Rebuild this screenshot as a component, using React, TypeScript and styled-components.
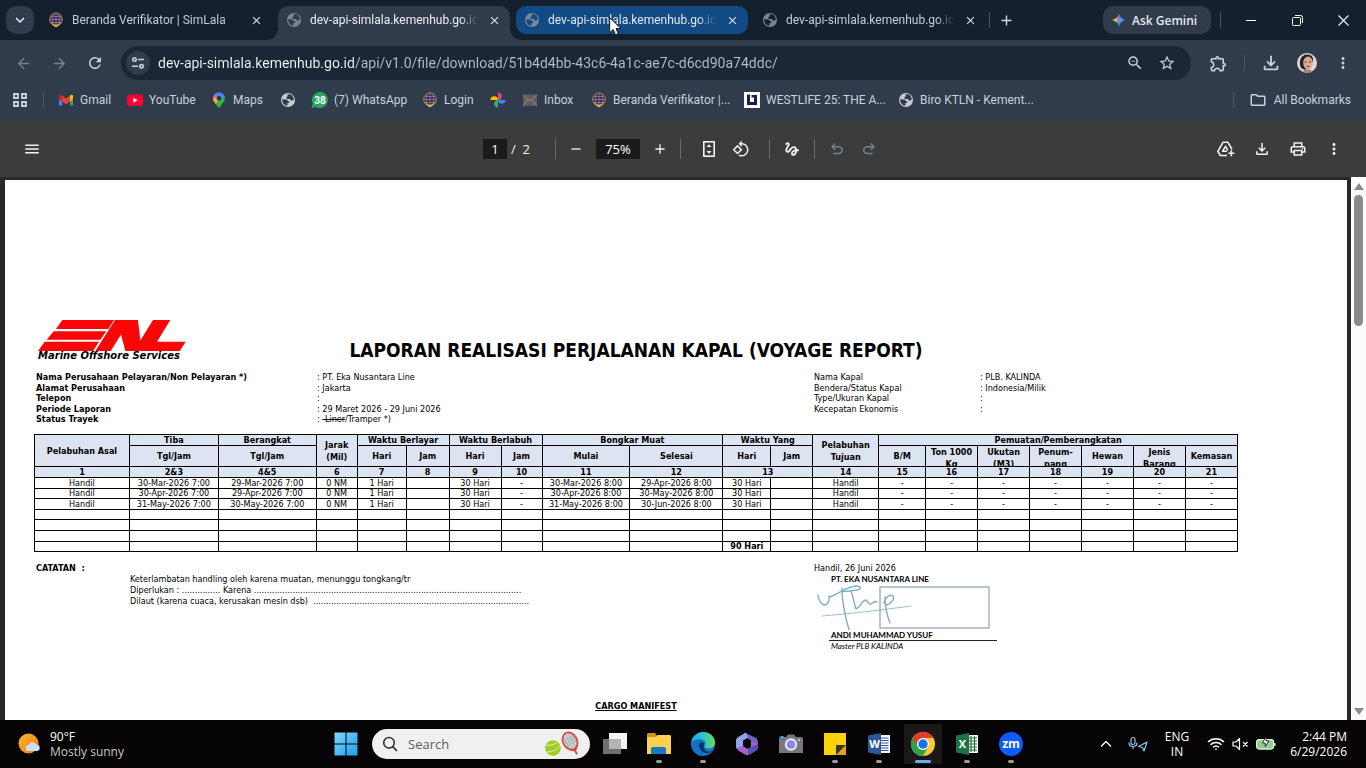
import React from "react";
import styled, { createGlobalStyle, css } from "styled-components";
import {
  MdAdd,
  MdArrowBack,
  MdArrowForward,
  MdClose,
  MdGesture,
  MdKeyboardArrowDown,
  MdMenu,
  MdMoreVert,
  MdOutlineExtension,
  MdOutlineFileDownload,
  MdOutlineFolder,
  MdOutlinePrint,
  MdRefresh,
  MdRemove,
  MdRotate90DegreesCcw,
  MdStarBorder,
  MdZoomOut,
} from "react-icons/md";

const uiFont = `"Open Sans", "Noto Sans", sans-serif`;
const chromeFont = `Roboto, "Open Sans", sans-serif`;
const docFont = `"DejaVu Sans Condensed", "DejaVu Sans", sans-serif`;

const GlobalStyle = createGlobalStyle`
  * { box-sizing: border-box; }
  body { margin: 0; background: #000; font-family: ${uiFont}; }
  button, input { font: inherit; color: inherit; border: 0; padding: 0; margin: 0; background: none; outline: 0; }
  a { color: inherit; text-decoration: none; }
  svg { display: block; flex: none; }
`;

const Desktop = styled.div`
  display: flex;
  flex-direction: column;
  height: 100vh;
  overflow: hidden;
`;

/* ---------- browser chrome ---------- */

const TabStrip = styled.header`
  display: flex;
  align-items: center;
  flex: none;
  height: 40px;
  padding-left: 6px;
  background: #14202d;
  color: #c6ccd4;
  font-family: ${chromeFont};
`;

const TabSearch = styled.button`
  display: grid;
  place-items: center;
  width: 28px;
  height: 28px;
  border-radius: 10px;
  background: #303b4b;
  color: #e8ebef;
`;

const Tabs = styled.div`
  display: flex;
  gap: 6px;
  margin: 0 3px 0 6px;
  height: 40px;
  align-items: center;
`;

const Tab = styled.div<{ $state?: "active" | "hover" }>`
  position: relative;
  display: flex;
  align-items: center;
  width: 232px;
  height: 28px;
  padding: 0 8px;
  border-radius: 10px;
  font-size: 12px;
  ${(p) =>
    p.$state === "hover" &&
    css`
      background: #124a83;
      color: #dfe7f0;
    `}
  ${(p) =>
    p.$state === "active" &&
    css`
      height: 34px;
      align-self: flex-end;
      padding-bottom: 6px;
      border-radius: 10px 10px 0 0;
      background: #303b4b;
      color: #eceff3;
      &::before,
      &::after {
        content: "";
        position: absolute;
        bottom: 0;
        width: 10px;
        height: 10px;
      }
      &::before {
        right: 100%;
        background: radial-gradient(circle at 0 0, transparent 9px, #303b4b 10px);
      }
      &::after {
        left: 100%;
        background: radial-gradient(circle at 100% 0, transparent 9px, #303b4b 10px);
      }
    `}
`;

const TabTitle = styled.button`
  flex: 1;
  min-width: 0;
  margin: 0 8px;
  overflow: hidden;
  white-space: nowrap;
  text-align: left;
  line-height: 20px;
  mask-image: linear-gradient(90deg, #000 calc(100% - 18px), transparent);
`;

const TabClose = styled.button`
  display: grid;
  place-items: center;
  width: 16px;
  height: 16px;
  color: #e0e4e9;
`;

const Divider = styled.span<{ $h?: number; $color?: string }>`
  flex: none;
  width: 1px;
  height: ${(p) => p.$h ?? 16}px;
  background: ${(p) => p.$color ?? "#4a5768"};
`;

const NewTab = styled.button`
  display: grid;
  place-items: center;
  width: 32px;
  height: 28px;
  color: #d5dae0;
`;

const WindowTools = styled.div`
  display: flex;
  align-items: center;
  margin-left: auto;
`;

const Gemini = styled.button`
  display: flex;
  align-items: center;
  gap: 6px;
  width: 108px;
  height: 28px;
  margin-right: 9px;
  padding-left: 9px;
  border-radius: 10px;
  background: #303b4b;
  color: #e4e8ee;
  font-family: ${uiFont};
  font-size: 12px;
  font-weight: 600;
  white-space: nowrap;
`;

const WindowButton = styled.button`
  display: grid;
  place-items: center;
  width: 46px;
  height: 40px;
  color: #fff;
`;

const AddressRow = styled.div`
  display: flex;
  align-items: center;
  flex: none;
  height: 46px;
  padding: 0 5px;
  background: #303b4b;
  color: #c9d1dc;
  font-family: ${chromeFont};
`;

const IconButton = styled.button<{ $w?: number; $dim?: boolean }>`
  display: grid;
  place-items: center;
  flex: none;
  width: ${(p) => p.$w ?? 36}px;
  height: 34px;
  ${(p) => p.$dim && "color: #768294;"}
`;

const Omnibox = styled.div`
  display: flex;
  align-items: center;
  flex: 1;
  height: 34px;
  margin: 0 9px 0 8px;
  padding: 0 8px 0 5px;
  border-radius: 17px;
  background: #1b2736;
`;

const SiteInfo = styled.button`
  display: grid;
  place-items: center;
  width: 24px;
  height: 24px;
  border-radius: 12px;
  background: #303b4b;
`;

const UrlInput = styled.input`
  flex: 1;
  min-width: 0;
  margin-left: 8px;
  font-size: 14px;
  line-height: 20px;
  color: transparent;
  background: linear-gradient(90deg, #f1f4f7 197px, #b4bdc9 197px);
  background-clip: text;
  -webkit-background-clip: text;
`;

const BookmarkBar = styled.nav`
  display: flex;
  align-items: center;
  flex: none;
  height: 35px;
  padding: 0 15px 7px 12px;
  background: #303b4b;
  color: #c9d1dc;
  font-family: ${chromeFont};
  font-size: 12px;
`;

const Bookmarks = styled.div`
  display: grid;
  grid-template-columns: 69px 84px 69px 31px 111px 68px 32px 69px 153px 154px 140px;
  margin-left: 14px;
`;

const Bookmark = styled.a`
  display: flex;
  align-items: center;
  gap: 6px;
  height: 20px;
  white-space: nowrap;
`;

const AllBookmarks = styled.button`
  display: flex;
  align-items: center;
  gap: 7px;
  margin-left: 15px;
  white-space: nowrap;
`;

/* ---------- PDF viewer ---------- */

const PdfToolbar = styled.div`
  display: grid;
  grid-template-columns: 1fr auto 1fr;
  align-items: center;
  flex: none;
  height: 56px;
  padding: 0 14px;
  background: #3c3c3c;
  color: #f1f1f1;
  font-size: 14px;
`;

const PdfGroup = styled.div<{ $end?: boolean }>`
  display: flex;
  align-items: center;
  justify-self: ${(p) => (p.$end ? "end" : "start")};
`;

const PdfField = styled.input<{ $w: number }>`
  width: ${(p) => p.$w}px;
  height: 20px;
  background: #1b1b1b;
  color: #fff;
  font-size: 13px;
  text-align: center;
`;

const PageTotal = styled.span`
  width: 43px;
  padding-left: 4px;
  font-size: 13px;
  white-space: pre;
`;

const Viewer = styled.main`
  display: flex;
  flex: 1;
  min-height: 0;
  padding: 3px 0 0 5px;
  background: #282828;
`;

const Sheet = styled.article`
  flex: 1;
  min-width: 0;
  margin-right: 4px;
  padding: 140px 109px 0 29px;
  overflow: hidden;
  background: #fff;
  color: #000;
  font-family: ${docFont};
  font-size: 9px;
`;

const Scrollbar = styled.div`
  display: flex;
  flex-direction: column;
  align-items: center;
  flex: none;
  width: 15px;
  margin-top: -3px;
  padding: 4px 0;
  background: #fcfcfc;
`;

const ScrollArrow = styled.button`
  display: grid;
  place-items: center;
  width: 15px;
  height: 10px;
`;

const ScrollTrack = styled.div`
  flex: 1;
  padding-top: 4px;
`;

const ScrollThumb = styled.div`
  width: 9px;
  height: 131px;
  border-radius: 5px;
  background: #8b8b8b;
`;

const Letterhead = styled.div`
  display: grid;
  grid-template-columns: 154px 1fr 154px;
  height: 52px;
`;

const Logo = styled.div`
  padding-left: 4px;
  font-family: "DejaVu Sans", sans-serif;
  font-size: 10px;
  font-style: italic;
  font-weight: 700;
  line-height: 9px;
  white-space: nowrap;
`;

const Title = styled.h1`
  margin: 18px 0 0;
  font-size: 19px;
  line-height: 24px;
  text-align: center;
  white-space: nowrap;
`;

const Particulars = styled.div`
  display: grid;
  grid-template-columns: 778px 1fr;
  padding-left: 2px;
`;

const Facts = styled.dl<{ $label: number; $bold?: boolean }>`
  display: grid;
  grid-template-columns: ${(p) => p.$label}px auto;
  grid-template-rows: 11px 10px 11px 10px 11px;
  justify-content: start;
  margin: 0;
  line-height: 11px;
  white-space: pre;
  dt {
    font-weight: ${(p) => (p.$bold ? 700 : 400)};
  }
  dd {
    margin: 0;
  }
`;

const Voyage = styled.table`
  width: 100%;
  margin: 9px 0 11px;
  table-layout: fixed;
  border-collapse: collapse;
  line-height: 9px;
  text-align: center;
  th,
  td {
    padding: 0;
    border: 1px solid #000;
    white-space: nowrap;
  }
  th {
    background: #dce4f1;
  }
  th[rowspan] {
    line-height: 12px;
  }
`;

const Row = styled.tr<{ $h: number }>`
  height: ${(p) => p.$h}px;
`;

const TwoLines = styled.div`
  height: 20px;
  overflow: hidden;
  line-height: 12px;
  white-space: pre;
`;

const Lower = styled.div`
  display: grid;
  grid-template-columns: 780px 1fr;
  line-height: 11px;
`;

const Notes = styled.section`
  padding-left: 2px;
  white-space: pre;
  p {
    width: 420px;
    margin: 0 0 0 94px;
  }
`;

const ClippedNote = styled.p`
  && {
    width: 281px;
    overflow: hidden;
  }
`;

const Signature = styled.section`
  font-size: 9px;
`;

const Signer = styled.div<{ $italic?: boolean; $rule?: boolean }>`
  width: 168px;
  margin-left: 15px;
  padding-left: 2px;
  height: 11px;
  font-family: Lato, "Open Sans", sans-serif;
  font-size: 8px;
  font-weight: ${(p) => (p.$italic ? 400 : 700)};
  font-style: ${(p) => (p.$italic ? "italic" : "normal")};
  border-bottom: ${(p) => (p.$rule ? "1px solid #222" : "0")};
`;

const Manifest = styled.h2`
  margin: 48px 0 0;
  font-size: 9px;
  line-height: 12px;
  text-align: center;
  text-decoration: underline;
`;

/* ---------- taskbar ---------- */

const Taskbar = styled.footer`
  display: grid;
  grid-template-columns: 1fr auto 1fr;
  flex: none;
  height: 48px;
  background: #050303;
  color: #fff;
  font-size: 12px;
  line-height: 15px;
`;

const Weather = styled.button`
  display: flex;
  align-items: center;
  gap: 10px;
  padding-left: 18px;
  text-align: left;
  white-space: nowrap;
  span {
    color: #c9c9c9;
  }
`;

const Dock = styled.div`
  display: flex;
  align-items: center;
  padding-right: 9px;
`;

const SearchPill = styled.label`
  display: flex;
  align-items: center;
  width: 218px;
  height: 30px;
  margin: 0 3px 0 4px;
  padding: 0 8px 0 10px;
  border-radius: 15px;
  background: #f0f0f0;
  color: #333;
`;

const SearchInput = styled.input`
  flex: 1;
  min-width: 0;
  margin-left: 10px;
  font-size: 13px;
  &::placeholder {
    color: #5c5c5c;
    opacity: 1;
  }
`;

const AppButton = styled.button<{ $run?: boolean; $current?: boolean }>`
  position: relative;
  display: grid;
  place-items: center;
  width: 44px;
  height: 48px;
  ${(p) =>
    p.$current &&
    css`
      background: linear-gradient(#1c1819, #1c1819) center / 38px 40px no-repeat;
    `}
  ${(p) =>
    (p.$run || p.$current) &&
    css`
      &::after {
        content: "";
        position: absolute;
        bottom: 5px;
        left: 50%;
        width: ${p.$current ? 16 : 6}px;
        height: 3px;
        border-radius: 2px;
        background: ${p.$current ? "#5fb2ee" : "#9a9a9a"};
        transform: translateX(-50%);
      }
    `}
`;

const Tray = styled.div`
  display: flex;
  align-items: center;
  justify-content: flex-end;
  padding-right: 19px;
`;

const TrayItem = styled.button<{ $w?: number; $right?: boolean }>`
  display: flex;
  align-items: center;
  justify-content: ${(p) => (p.$right ? "flex-end" : "center")};
  width: ${(p) => p.$w ?? 32}px;
  height: 48px;
  text-align: ${(p) => (p.$right ? "right" : "center")};
`;

/* ---------- icons ---------- */

const Globe = ({ color = "#c6ccd4", land = "#303b4b" }) => (
  <svg width="16" height="16" viewBox="0 0 16 16" aria-hidden="true">
    <circle cx="8" cy="8" r="7" fill={color} />
    <path d="M2.3 7.2 6 7.4c1.2.1 1.900.9 1.900 1.900h1.300v1.800H7.400v2.700C4.300 13.500 2.300 11 2.200 8z" fill={land} />
    <path d="M7 2.300h3.400c2 .9 3.200 2.700 3.400 5-.8 1.300-1.800 1.700-3 1.300L10 6.900H7.600c-1 0-1.300-.5-1.300-1.200S6.800 4.600 7.600 4.600H8c0-.9-.4-1.500-1-2.300z" fill={land} />
  </svg>
);

const Crest = () => (
  <svg width="16" height="16" viewBox="0 0 16 16" aria-hidden="true">
    <circle cx="8" cy="7.200" r="6.300" fill="#35265f" stroke="#a88a45" strokeWidth="1" />
    <path d="M3 4.500h10M2 7.500h12M3 10.500h10M8 1v12M5.500 2c-1.500 3-1.500 7 0 10M10.500 2c1.500 3 1.500 7 0 10" fill="none" stroke="#a48a9a" strokeWidth=".7" />
    <path d="M1.500 8.500c.8 3.200 3 4.500 6.500 7 3.500-2.500 5.700-3.800 6.500-7C13 11 11 12.800 8 12.800S3 11 1.500 8.500z" fill="#d8c22e" />
  </svg>
);

const GmailIcon = () => (
  <svg width="16" height="16" viewBox="0 0 16 16" aria-hidden="true">
    <path d="M1 4v9.500h3V7z" fill="#4285f4" />
    <path d="M15 4v9.500h-3V7z" fill="#34a853" />
    <path d="M12 3.500c1.200-1.300 3-1.100 3 .5v3l-3 2.500z" fill="#fbbc04" />
    <path d="M4 3.500 8 6.800l4-3.300v6L8 12.200 4 9.500z" fill="#ea4335" />
    <path d="M1 4c0-1.600 1.800-1.800 3-.5v6L1 7z" fill="#c5221f" />
  </svg>
);

const YoutubeIcon = () => (
  <svg width="16" height="16" viewBox="0 0 16 16" aria-hidden="true">
    <rect x="0" y="2.500" width="16" height="11.500" rx="3" fill="#ff0033" />
    <path d="M6.300 5.700v5l4.300-2.500z" fill="#fff" />
  </svg>
);

const MapsIcon = () => (
  <svg width="16" height="16" viewBox="0 0 16 16" aria-hidden="true">
    <defs>
      <clipPath id="pin">
        <path d="M8 .5a5.900 5.900 0 0 1 5.900 5.900c0 3.300-2.700 4.300-4.300 8-.4 1.500-2.800 1.500-3.200 0-1.600-3.700-4.300-4.700-4.300-8A5.900 5.900 0 0 1 8 .5z" />
      </clipPath>
    </defs>
    <g clipPath="url(#pin)">
      <path d="M0 0h16v16H0z" fill="#34b04a" />
      <path d="M0 0h9L8 6.400 0 12z" fill="#e85ac0" />
      <path d="M8 0h8v4L8 6.400 4 2z" fill="#4285f4" />
      <path d="M0 5l8 1.400-3 5.600-5 1z" fill="#f5b02a" />
    </g>
    <circle cx="8" cy="6.300" r="2.300" fill="#24354d" />
  </svg>
);

const WhatsappIcon = () => (
  <svg width="17" height="16" viewBox="0 0 17 16" aria-hidden="true">
    <path d="M9 0a8 8 0 1 1-4 15L.6 16l1.200-4.400A8 8 0 0 1 9 0z" fill="#25a866" />
    <text x="9" y="11.500" textAnchor="middle" fontSize="10" fontWeight="700" fill="#fff">38</text>
  </svg>
);

const PhotosIcon = () => (
  <svg width="16" height="16" viewBox="0 0 16 16" aria-hidden="true">
    <path d="M8 .5a3.700 3.700 0 0 1 0 7.500z" fill="#ea4369" />
    <path d="M15.500 8A3.700 3.700 0 0 1 8 8z" fill="#4285f4" />
    <path d="M8 15.500A3.700 3.700 0 0 1 8 8z" fill="#34b26b" />
    <path d="M.5 8A3.700 3.700 0 0 1 8 8z" fill="#fbbc04" />
  </svg>
);

const InboxIcon = () => (
  <svg width="16" height="16" viewBox="0 0 16 16" aria-hidden="true">
    <rect x="1" y="2.500" width="14" height="11.500" fill="#5f5c5b" />
    <path d="m1 3 7 6 7-6M1 14l5-6.500M15 14l-5-6.500" fill="none" stroke="#8f8b88" strokeWidth="1" />
  </svg>
);

const WestlifeIcon = () => (
  <svg width="16" height="16" viewBox="0 0 16 16" aria-hidden="true">
    <path fill="#fff" d="M0 0h16v16H0z" />
    <path fill="#241c4e" d="M3 2.500h3V10h4V5.500H7.500V3H13v10H3z" />
  </svg>
);

const AppsGrid = () => (
  <svg width="16" height="16" viewBox="0 0 16 16" fill="none" stroke="currentColor" strokeWidth="1.800" aria-hidden="true">
    <path d="M2 2h4v4H2zM10 2h4v4h-4zM2 10h4v4H2zM10 10h4v4h-4z" />
  </svg>
);

const TuneIcon = () => (
  <svg width="14" height="14" viewBox="0 0 14 14" fill="none" stroke="currentColor" strokeWidth="1.600" aria-hidden="true">
    <circle cx="3.500" cy="3.500" r="1.700" />
    <path d="M7 3.500h6M1 10.300h6" />
    <circle cx="10.500" cy="10.300" r="1.700" />
  </svg>
);

const GeminiSpark = () => (
  <svg width="14" height="14" viewBox="0 0 14 14" aria-hidden="true">
    <path d="M7 0c.5 3.600 3.400 6.500 7 7H7z" fill="#4a7cf0" />
    <path d="M7 0C6.500 3.600 3.600 6.500 0 7h7z" fill="#ea5a4a" />
    <path d="M0 7c3.600.5 6.500 3.400 7 7V7z" fill="#46b06a" />
    <path d="M14 7c-3.600.5-6.500 3.400-7 7V7z" fill="#3f8cf5" />
    <path d="M0 7c2-.3 3.600-1.300 4.800-2.700L7 7l-2.500 2.500C3.300 8.200 1.800 7.300 0 7z" fill="#f2bd2c" />
    <circle cx="7.500" cy="7" r="2.600" fill="#5a8df5" />
  </svg>
);

const Avatar = () => (
  <svg width="20" height="20" viewBox="0 0 20 20" aria-hidden="true">
    <circle cx="10" cy="10" r="10" fill="#d9d8da" />
    <path d="M4 15C1 8 4 1.500 10 1.500c5 0 6.500 3 6 7L8 17z" fill="#2b2220" />
    <ellipse cx="11" cy="10" rx="4.800" ry="6.500" fill="#d9ab92" />
    <path d="M7.500 9h2M12 9h2M9.800 13.500h2.600" stroke="#5f352e" strokeWidth="1" />
    <path d="M6 18.500c1-3 8-3 9 0-2.500 2-6.500 2-9 0z" fill="#b08474" />
  </svg>
);

const FitPage = () => (
  <svg width="20" height="20" viewBox="0 0 20 20" aria-hidden="true">
    <rect x="4.800" y="2.800" width="10.400" height="14.400" fill="none" stroke="currentColor" strokeWidth="1.600" />
    <path d="M10 5.300 7.500 8h5zM10 14.700 7.500 12h5z" fill="currentColor" />
  </svg>
);

const UndoIcon = ({ flip }: { flip?: boolean }) => (
  <svg width="18" height="18" viewBox="0 -960 960 960" fill="currentColor" aria-hidden="true">
    <path
      transform={flip ? "translate(960 0) scale(-1 1)" : undefined}
      d="M280-200v-80h284q63 0 109.500-40T720-420q0-60-46.500-100T564-560H312l104 104-56 56-200-200 200-200 56 56-104 104h252q97 0 166.500 63T800-420q0 94-69.500 157T564-200H280Z"
    />
  </svg>
);

const DriveAdd = () => (
  <svg width="20" height="18" viewBox="0 0 20 18" fill="none" stroke="currentColor" strokeWidth="1.600" strokeLinejoin="round" aria-hidden="true">
    <path d="M11 15.500H4.300L1.800 11.300 7 2.300h5l4 7" />
    <path d="M11 11.300H6.500l3-5 2.300 4" />
    <path d="M15.300 10.300v6M12.300 13.300h6" />
  </svg>
);

const EnlLogo = () => (
  <svg width="148" height="31" viewBox="0 0 444 94" preserveAspectRatio="none" aria-label="ENL">
    <g fill="#fb0606">
      <path d="M73 0h155l-17 27H54zM47 34h158l-18 26H26zM20 66h163l-18 28H0z" />
      <path d="M172 94 231 0h69l7 62L345 0h52l-40 66h86l-18 28H262l-13-50-31 50z" />
    </g>
  </svg>
);

const SignatureArt = () => (
  <svg width="184" height="45" viewBox="0 2 184 45" fill="none" aria-label="Signature">
    <rect x="66" y="4" width="109" height="41" stroke="#a9b7cc" strokeWidth="1.600" />
    <g stroke="#7fb0bd" strokeWidth="1.400" strokeLinecap="round" strokeLinejoin="round">
      <path d="M4 12c0 4 3 9 6 10 4 0 6-5 5-9M16 14c10-4 16-10 26-11 5 0 6 3 1 4-6 1-13 2-15 1" />
      <path d="M28 5c0 14 3 28 7 42" />
      <path d="M37 8c2 5 3 12 5 18 4-1 6-9 10-9 2 2 3 5 5 4 2-1 3-3 6-2" />
      <path d="M71 14c0 8 1 16 5 26M70 20c1-6 6-9 9-7 2 3-2 8-7 9" />
      <path d="M8 33c24-2 60-6 89-10" strokeWidth=".8" />
    </g>
  </svg>
);

const WeatherIcon = () => (
  <svg width="22" height="22" viewBox="0 0 22 22" aria-hidden="true">
    <defs>
      <linearGradient id="sun" x1="0" y1="0" x2="1" y2="1">
        <stop offset="0" stopColor="#ffb52b" />
        <stop offset="1" stopColor="#ef7c1a" />
      </linearGradient>
    </defs>
    <circle cx="10.500" cy="10.500" r="10" fill="url(#sun)" />
    <path d="M11 18a3 3 0 0 1-.3-6 4 4 0 0 1 7.400-.6 3.300 3.300 0 0 1 .6 6.600z" fill="#cfdcf7" />
  </svg>
);

const WindowsLogo = () => (
  <svg width="24" height="24" viewBox="0 0 24 24" aria-hidden="true">
    <defs>
      <linearGradient id="win" x1="0" y1="0" x2="1" y2="1">
        <stop offset="0" stopColor="#7fd8ff" />
        <stop offset="1" stopColor="#1d9df0" />
      </linearGradient>
    </defs>
    <path d="M.5.500h11v11H.5zM12.500.500h11v11h-11zM.5 12.500h11v11H.5zM12.500 12.500h11v11h-11z" fill="url(#win)" />
  </svg>
);

const TennisArt = () => (
  <svg width="38" height="26" viewBox="0 0 38 26" aria-hidden="true">
    <g transform="rotate(-28 26 10)">
      <ellipse cx="26" cy="10" rx="7" ry="9" fill="#cfd6d8" stroke="#d9483b" strokeWidth="1.800" />
      <path d="M22 3v14M25 1.500v17M28 1.500v17M31 4v12M19.500 7h13M19 10h14M19.500 13h13" stroke="#8a9396" strokeWidth=".5" />
      <path d="M22 17.500 26 21l4-3.500M26 20v5" fill="none" stroke="#d9483b" strokeWidth="1.800" />
    </g>
    <circle cx="9" cy="17" r="7.800" fill="#a3cc22" />
    <path d="M2 14c5 1 10-1 12-4M3 21c6 0 11-3 13.500-7" fill="none" stroke="#e8f3c0" strokeWidth="1" />
  </svg>
);

const TaskView = () => (
  <svg width="24" height="24" viewBox="0 0 24 24" aria-hidden="true">
    <path d="M6 1h18v16H6z" fill="#f4f4f4" />
    <path d="M0 7h18v15H0z" fill="#6f6f6f" />
    <path d="M6 7h12v10H6z" fill="#b5b5b5" />
  </svg>
);

const Explorer = () => (
  <svg width="24" height="24" viewBox="0 0 24 24" aria-hidden="true">
    <path d="M0 2.500C0 1.700.6 1 1.500 1H8l2 3v4H0z" fill="#d59312" />
    <path d="M0 5h9l1.500-2H22.500c.9 0 1.500.6 1.500 1.500V22H0z" fill="#fdd14f" />
    <path d="M4 22v-5c0-1.500 1-2 2-2h11c1.500 0 2 .8 2 2v5z" fill="#1b78c4" />
  </svg>
);

const Edge = () => (
  <svg width="24" height="24" viewBox="0 0 24 24" aria-hidden="true">
    <defs>
      <linearGradient id="edge" x1="0" y1="0" x2="1" y2="0">
        <stop offset="0" stopColor="#2aa6e8" />
        <stop offset=".5" stopColor="#2fc3d0" />
        <stop offset="1" stopColor="#66dc52" />
      </linearGradient>
    </defs>
    <circle cx="12" cy="12" r="12" fill="#1073c6" />
    <path d="M.3 10.500C1.500 4.500 6.200 0 12 0c7 0 12 5 12 10.500 0 3.800-2.900 6-6 6-3.300 0-4.700-1.400-4.500-2.300.2-.6 1-1.200 1-2.700 0-2.500-3-4.200-6-4.200-4 0-7 1.400-8.200 3.200z" fill="url(#edge)" />
    <path d="M8 12.500C7.800 18.500 13 22 17.500 21c2-.5 3.300-1.200 4.500-2.500-3 2-8.500 1.500-9-2.500-.2-1.500-.8-3 .7-4.500-2-1.500-5.500-1.200-5.700 1z" fill="#07346b" />
  </svg>
);

const Office = () => (
  <svg width="24" height="24" viewBox="0 0 24 24" aria-hidden="true">
    <path d="M10.500.800 20 5.500c2 1 3 2.500 3 4.500v5l-7-3V8.500L12 6 7.500 8.500 2 17c-.8-1-1-2-1-3V9c0-2 .8-3 2.500-4z" fill="#6d63c8" />
    <path d="M10.500.800 3.500 5C1.800 6 1 7 1 9v5c0 1.300.5 2.500 1.500 3.300L8 14V8.500l5-3z" fill="#93a5e8" />
    <path d="m8 14 4.500 3L16 15V9l7 3v3c0 1.800-1 3-2.500 4l-6 3.500c-1.500.8-3 .8-4.500 0l-6-3.500c-1.200-.7-1.500-1.500-2-3L8 14z" fill="#a65fcb" />
    <path d="m16 15 7-3v3c0 1.800-1 3-2.500 4L13 23v-6z" fill="#5450b0" />
  </svg>
);

const Camera = () => (
  <svg width="24" height="24" viewBox="0 0 24 24" aria-hidden="true">
    <path d="M0 7c0-1.300.7-2 2-2h5l2-2.500h6L17 5h5c1.300 0 2 .7 2 2v14H0z" fill="#74787d" />
    <path d="M1 5c0-1.500 4-1.500 4 0v1H1z" fill="#36a9e6" />
    <circle cx="12" cy="12.500" r="6.200" fill="#e9e9ef" />
    <circle cx="12" cy="12.500" r="4.300" fill="#8f86ea" />
    <circle cx="20" cy="8" r="1" fill="#d7d7d7" />
  </svg>
);

const Sticky = () => (
  <svg width="22" height="22" viewBox="0 0 22 22" aria-hidden="true">
    <path d="M0 0h22v12l-10 10H0z" fill="#fcd40b" />
    <path d="M12 12h10L12 22z" fill="#37352e" />
    <path d="M22 12v10H12z" fill="#e8a112" />
  </svg>
);

const OfficeDoc = ({ color, dark, letter, grid }: { color: string; dark: string; letter: string; grid?: boolean }) => (
  <svg width="24" height="24" viewBox="0 0 24 24" aria-hidden="true">
    <path d="M12 3h11v18H12z" fill="#fff" />
    <path d={grid ? "M13 6h9M13 9h9M13 12h9M13 15h9M13 18h9M16 4v16M19.500 4v16" : "M14 6h7.500M14 8.500h7.500M14 11h7.500M14 13.500h7.500M14 16h7.500M14 18.500h7.500"} stroke={color} strokeWidth="1.200" />
    <path d="M1 3.500 14 1v22L1 20.500z" fill={dark} />
    <text x="7.500" y="16" textAnchor="middle" fontSize="11" fontWeight="700" fill="#fff">{letter}</text>
  </svg>
);

const Chrome = () => (
  <svg width="24" height="24" viewBox="0 0 24 24" aria-hidden="true">
    <circle cx="12" cy="12" r="12" fill="#fcc934" />
    <path d="M12 12 1.600 6A12 12 0 0 0 12 24l5.200-9z" fill="#2ba24c" />
    <path d="M12 6h10.400A12 12 0 0 0 1.600 6l5.200 9L12 12z" fill="#e33b2e" />
    <circle cx="12" cy="12" r="6" fill="#fff" />
    <circle cx="12" cy="12" r="4.700" fill="#1a73e8" />
  </svg>
);

const Zoom = () => (
  <svg width="24" height="24" viewBox="0 0 24 24" aria-hidden="true">
    <circle cx="12" cy="12" r="12" fill="#0b5cff" />
    <text x="12" y="16" textAnchor="middle" fontSize="12" fontWeight="700" fill="#fff">zm</text>
  </svg>
);

const Line = ({ d, w = 16, h = 16, color = "currentColor", sw = 1.200 }: { d: string; w?: number; h?: number; color?: string; sw?: number }) => (
  <svg width={w} height={h} viewBox={`0 0 ${w} ${h}`} fill="none" stroke={color} strokeWidth={sw} strokeLinejoin="round" aria-hidden="true">
    <path d={d} />
  </svg>
);

const Battery = () => (
  <svg width="20" height="16" viewBox="0 0 20 16" aria-hidden="true">
    <rect x=".6" y="3.600" width="17" height="9.500" rx="2.500" fill="#8fce8f" stroke="#eaf6ea" strokeWidth="1.100" />
    <path d="M18.800 7v3" stroke="#eaf6ea" strokeWidth="1.400" />
    <path d="M10 .5 6.500 7h2.700v3.500L13 5h-3z" fill="#fff" stroke="#0a0a0a" strokeWidth=".8" />
  </svg>
);

/* ---------- data ---------- */

const bookmarks: { label?: string; name: string; icon: React.ReactNode }[] = [
  { name: "Gmail", label: "Gmail", icon: <GmailIcon /> },
  { name: "YouTube", label: "YouTube", icon: <YoutubeIcon /> },
  { name: "Maps", label: "Maps", icon: <MapsIcon /> },
  { name: "Website", icon: <Globe /> },
  { name: "WhatsApp", label: "(7) WhatsApp", icon: <WhatsappIcon /> },
  { name: "Login", label: "Login", icon: <Crest /> },
  { name: "Photos", icon: <PhotosIcon /> },
  { name: "Inbox", label: "Inbox", icon: <InboxIcon /> },
  { name: "Beranda", label: "Beranda Verifikator |...", icon: <Crest /> },
  { name: "Westlife", label: "WESTLIFE 25: THE A...", icon: <WestlifeIcon /> },
  { name: "Biro KTLN", label: "Biro KTLN - Kement...", icon: <Globe /> },
];

const columns = [95, 89, 98, 41, 49, 43, 52, 41, 88, 93, 48, 42, 66, 47, 52, 52, 52, 52, 52, 52];

const voyages = [
  ["30-Mar-2026 7:00", "29-Mar-2026 7:00", "30-Mar-2026 8:00", "29-Apr-2026 8:00"],
  ["30-Apr-2026 7:00", "29-Apr-2026 7:00", "30-Apr-2026 8:00", "30-May-2026 8:00"],
  ["31-May-2026 7:00", "30-May-2026 7:00", "31-May-2026 8:00", "30-Jun-2026 8:00"],
].map(([arrive, depart, start, end]) => [
  "Handil", arrive, depart, "0 NM", "1 Hari", "", "30 Hari", "-", start, end, "30 Hari", "", "Handil",
  "-", "-", "-", "-", "-", "-", "-",
]);

const blank = columns.map(() => "");
const total = columns.map((_, i) => (i === 10 ? "90 Hari" : ""));
const bodyRows = [...voyages, blank, blank, blank, total];
const rowHeights = [11, 10, 11, 10, 11, 11, 10];

const numbers = ["1", "2&3", "4&5", "6", "7", "8", "9", "10", "11", "12", "13", "14", "15", "16", "17", "18", "19", "20", "21"];
const subheads = ["Tgl/Jam", "Tgl/Jam", "Hari", "Jam", "Hari", "Jam", "Mulai", "Selesai", "Hari", "Jam", "B/M", "Ton 1000\nKg", "Ukutan\n(M3)", "Penum-\npang", "Hewan", "Jenis\nBarang", "Kemasan"];

const apiTitle = "dev-api-simlala.kemenhub.go.id";

function BrowserTab({ title, icon, state }: { title: string; icon: React.ReactNode; state?: "active" | "hover" }) {
  return (
    <Tab $state={state}>
      {icon}
      <TabTitle role="tab" aria-selected={state === "active"}>{title}</TabTitle>
      <TabClose aria-label="Close tab"><MdClose size={13} /></TabClose>
    </Tab>
  );
}

function VoyageTable() {
  return (
    <Voyage>
      <colgroup>
        {columns.map((w, i) => <col key={i} style={{ width: `${(w / 1204) * 100}%` }} />)}
      </colgroup>
      <thead>
        <Row $h={11}>
          <th rowSpan={2}>Pelabuhan Asal</th>
          <th>Tiba</th>
          <th>Berangkat</th>
          <th rowSpan={2}>Jarak<br />(Mil)</th>
          <th colSpan={2}>Waktu Berlayar</th>
          <th colSpan={2}>Waktu Berlabuh</th>
          <th colSpan={2}>Bongkar Muat</th>
          <th colSpan={2}>Waktu Yang</th>
          <th rowSpan={2}>Pelabuhan<br />Tujuan</th>
          <th colSpan={7}>Pemuatan/Pemberangkatan</th>
        </Row>
        <Row $h={21}>
          {subheads.map((s, i) => <th key={i}>{s.includes("\n") ? <TwoLines>{s}</TwoLines> : s}</th>)}
        </Row>
        <Row $h={11}>
          {numbers.map((n) => <th key={n} colSpan={n === "13" ? 2 : 1}>{n}</th>)}
        </Row>
      </thead>
      <tbody>
        {bodyRows.map((cells, r) => (
          <Row key={r} $h={rowHeights[r]}>
            {cells.map((c, i) => <td key={i}>{r === 6 && c ? <b>{c}</b> : c}</td>)}
          </Row>
        ))}
      </tbody>
    </Voyage>
  );
}

export default function App() {
  return (
    <Desktop>
      <GlobalStyle />
      <TabStrip>
        <TabSearch aria-label="Search tabs"><MdKeyboardArrowDown size={18} /></TabSearch>
        <Tabs role="tablist">
          <BrowserTab title="Beranda Verifikator | SimLala" icon={<Crest />} />
          <BrowserTab title={apiTitle} icon={<Globe color="#7d858e" />} state="active" />
          <BrowserTab title={apiTitle} icon={<Globe color="#7d8a97" land="#124a83" />} state="hover" />
          <BrowserTab title={apiTitle} icon={<Globe color="#7d858e" land="#14202d" />} />
        </Tabs>
        <Divider />
        <NewTab aria-label="New tab"><MdAdd size={17} /></NewTab>
        <WindowTools>
          <Gemini><GeminiSpark />Ask Gemini</Gemini>
          <Divider />
          <WindowButton aria-label="Minimize" style={{ marginLeft: 7 }}><Line w={10} h={10} sw={1} d="M0 5.500h10" /></WindowButton>
          <WindowButton aria-label="Restore"><Line w={11} h={11} sw={1} d="M1.500 2.500h6a1 1 0 0 1 1 1v6a1 1 0 0 1-1 1h-6a1 1 0 0 1-1-1v-6a1 1 0 0 1 1-1zM3 .500h5.500a2 2 0 0 1 2 2V8" /></WindowButton>
          <WindowButton aria-label="Close"><Line w={11} h={11} sw={1.100} d="m.500.500 10 10m0-10-10 10" /></WindowButton>
        </WindowTools>
      </TabStrip>

      <AddressRow>
        <IconButton aria-label="Back" $dim><MdArrowBack size={17} /></IconButton>
        <IconButton aria-label="Forward" $dim><MdArrowForward size={17} /></IconButton>
        <IconButton aria-label="Reload"><MdRefresh size={18} /></IconButton>
        <Omnibox>
          <SiteInfo aria-label="Site information"><TuneIcon /></SiteInfo>
          <UrlInput aria-label="Address" defaultValue="dev-api-simlala.kemenhub.go.id/api/v1.0/file/download/51b4d4bb-43c6-4a1c-ae7c-d6cd90a74ddc/" />
          <IconButton $w={32} aria-label="Zoom"><MdZoomOut size={18} /></IconButton>
          <IconButton $w={32} aria-label="Bookmark"><MdStarBorder size={18} /></IconButton>
        </Omnibox>
        <IconButton aria-label="Extensions"><MdOutlineExtension size={19} /></IconButton>
        <Divider style={{ margin: "0 8px" }} />
        <IconButton aria-label="Downloads"><MdOutlineFileDownload size={22} /></IconButton>
        <IconButton aria-label="Profile"><Avatar /></IconButton>
        <IconButton aria-label="Menu"><MdMoreVert size={18} /></IconButton>
      </AddressRow>

      <BookmarkBar aria-label="Bookmarks">
        <button aria-label="Tab groups"><AppsGrid /></button>
        <Divider style={{ marginLeft: 15 }} />
        <Bookmarks>
          {bookmarks.map((b) => (
            <Bookmark key={b.name} href="#" aria-label={b.name}>{b.icon}{b.label}</Bookmark>
          ))}
        </Bookmarks>
        <Divider style={{ marginLeft: "auto" }} />
        <AllBookmarks><MdOutlineFolder size={18} />All Bookmarks</AllBookmarks>
      </BookmarkBar>

      <PdfToolbar>
        <PdfGroup><IconButton aria-label="Sidebar"><MdMenu size={18} /></IconButton></PdfGroup>
        <PdfGroup>
          <PdfField $w={24} aria-label="Page" defaultValue="1" />
          <PageTotal>/  2</PageTotal>
          <Divider $h={20} $color="#6a6a6a" style={{ marginLeft: 5 }} />
          <IconButton $w={40} aria-label="Zoom out"><MdRemove size={16} /></IconButton>
          <PdfField $w={44} aria-label="Zoom level" defaultValue="75%" />
          <IconButton $w={40} aria-label="Zoom in"><MdAdd size={16} /></IconButton>
          <Divider $h={20} $color="#6a6a6a" />
          <IconButton aria-label="Fit to page" style={{ marginLeft: 10 }}><FitPage /></IconButton>
          <IconButton $w={28} aria-label="Rotate"><MdRotate90DegreesCcw size={18} /></IconButton>
          <Divider $h={20} $color="#6a6a6a" style={{ marginLeft: 14 }} />
          <IconButton $w={44} aria-label="Draw"><MdGesture size={18} /></IconButton>
          <Divider $h={20} $color="#6a6a6a" />
          <IconButton $w={44} $dim aria-label="Undo"><UndoIcon /></IconButton>
          <IconButton $w={28} $dim aria-label="Redo" style={{ marginLeft: -4 }}><UndoIcon flip /></IconButton>
        </PdfGroup>
        <PdfGroup $end>
          <IconButton aria-label="Save to Drive"><DriveAdd /></IconButton>
          <IconButton aria-label="Download"><MdOutlineFileDownload size={18} /></IconButton>
          <IconButton aria-label="Print"><MdOutlinePrint size={18} /></IconButton>
          <IconButton aria-label="More"><MdMoreVert size={18} /></IconButton>
        </PdfGroup>
      </PdfToolbar>

      <Viewer>
        <Sheet>
          <Letterhead>
            <Logo><EnlLogo />Marine Offshore Services</Logo>
            <Title>LAPORAN REALISASI PERJALANAN KAPAL (VOYAGE REPORT)</Title>
          </Letterhead>
          <Particulars>
            <Facts $label={281} $bold>
              <dt>Nama Perusahaan Pelayaran/Non Pelayaran *)</dt><dd>: PT. Eka Nusantara Line</dd>
              <dt>Alamat Perusahaan</dt><dd>: Jakarta</dd>
              <dt>Telepon</dt><dd>:</dd>
              <dt>Periode Laporan</dt><dd>: 29 Maret 2026 - 29 Juni 2026</dd>
              <dt>Status Trayek</dt><dd>: <s> Liner</s>/Tramper *)</dd>
            </Facts>
            <Facts $label={166}>
              <dt>Nama Kapal</dt><dd>: PLB. KALINDA</dd>
              <dt>Bendera/Status Kapal</dt><dd>: Indonesia/Milik</dd>
              <dt>Type/Ukuran Kapal</dt><dd>:</dd>
              <dt>Kecepatan Ekonomis</dt><dd>:</dd>
            </Facts>
          </Particulars>
          <VoyageTable />
          <Lower>
            <Notes>
              <b>CATATAN  :</b>
              <ClippedNote>Keterlambatan handling oleh karena muatan, menunggu tongkang/tru</ClippedNote>
              <p>{"Diperlukan : ............... Karena " + ".".repeat(104)}</p>
              <p>{"Dilaut (karena cuaca, kerusakan mesin dsb)  " + ".".repeat(84)}</p>
            </Notes>
            <Signature>
              Handil, 26 Juni 2026
              <Signer>PT. EKA NUSANTARA LINE</Signer>
              <SignatureArt />
              <Signer $rule>ANDI MUHAMMAD YUSUF</Signer>
              <Signer $italic>Master PLB KALINDA</Signer>
            </Signature>
          </Lower>
          <Manifest>CARGO MANIFEST</Manifest>
        </Sheet>
        <Scrollbar>
          <ScrollArrow aria-label="Scroll up"><svg width="10" height="7"><path d="M5 0l5 7H0z" fill="#8b8b8b" /></svg></ScrollArrow>
          <ScrollTrack><ScrollThumb /></ScrollTrack>
          <ScrollArrow aria-label="Scroll down"><svg width="10" height="7"><path d="M5 7l5-7H0z" fill="#8b8b8b" /></svg></ScrollArrow>
        </Scrollbar>
      </Viewer>

      <Taskbar>
        <Weather><WeatherIcon /><div>90°F<br /><span>Mostly sunny</span></div></Weather>
        <Dock>
          <AppButton aria-label="Start"><WindowsLogo /></AppButton>
          <SearchPill>
            <Line w={16} h={16} sw={1.600} d="M7 1.500a5.300 5.300 0 1 0 0 10.600 5.300 5.300 0 0 0 0-10.600zM10.800 10.600 15 15" />
            <SearchInput placeholder="Search" aria-label="Search" />
            <TennisArt />
          </SearchPill>
          <AppButton aria-label="Task view"><TaskView /></AppButton>
          <AppButton $run aria-label="File Explorer"><Explorer /></AppButton>
          <AppButton $run aria-label="Edge"><Edge /></AppButton>
          <AppButton aria-label="Microsoft 365"><Office /></AppButton>
          <AppButton aria-label="Camera"><Camera /></AppButton>
          <AppButton $run aria-label="Sticky Notes"><Sticky /></AppButton>
          <AppButton $run aria-label="Word"><OfficeDoc color="#2b579a" dark="#2b579a" letter="W" /></AppButton>
          <AppButton $current aria-label="Chrome"><Chrome /></AppButton>
          <AppButton $run aria-label="Excel"><OfficeDoc color="#217346" dark="#1f7244" letter="X" grid /></AppButton>
          <AppButton $run aria-label="Zoom"><Zoom /></AppButton>
        </Dock>
        <Tray>
          <TrayItem aria-label="Hidden icons"><Line w={12} h={12} sw={1.400} d="m1 8.500 5-5 5 5" /></TrayItem>
          <TrayItem aria-label="Microphone and location"><Line w={20} h={16} color="#8cc8ec" d="M5 1.500c-1.200 0-2 .8-2 2v3c0 1.200.8 2 2 2s2-.8 2-2v-3c0-1.200-.8-2-2-2zM1 6.500c0 2.500 1.500 4 4 4s4-1.500 4-4M5 10.500V13M19 6l-8.500 4.500 4 1 1.500 3.500z" /></TrayItem>
          <TrayItem $w={46}>ENG<br />IN</TrayItem>
          <TrayItem $w={82} aria-label="Network, volume, battery" style={{ gap: 7 }}>
            <Line w={18} h={16} sw={1.500} d="M1 6c4.500-4.300 11.500-4.300 16 0M3.500 8.800c3.200-3 7.800-3 11 0M6 11.300c1.800-1.600 4.200-1.600 6 0M8.300 13.300h1.400" />
            <Line w={17} h={16} d="M1 6v4h3l3.500 3.500v-11L4 6zM11 6l4.500 4.500M15.500 6 11 10.500" />
            <Battery />
          </TrayItem>
          <TrayItem $w={65} $right>2:44 PM<br />6/29/2026</TrayItem>
        </Tray>
      </Taskbar>
      <Pointer />
    </Desktop>
  );
}

const PointerShape = styled.svg`
  position: absolute;
  left: 609px;
  top: 17px;
  pointer-events: none;
`;

function Pointer() {
  return (
    <PointerShape width="13" height="19" viewBox="0 0 13 19" aria-hidden="true">
      <path d="M.7.700v15l3.500-3.300 2.300 5.400 2.700-1.200L7 11.500h5z" fill="#fff" stroke="#111" strokeWidth=".9" />
    </PointerShape>
  );
}
